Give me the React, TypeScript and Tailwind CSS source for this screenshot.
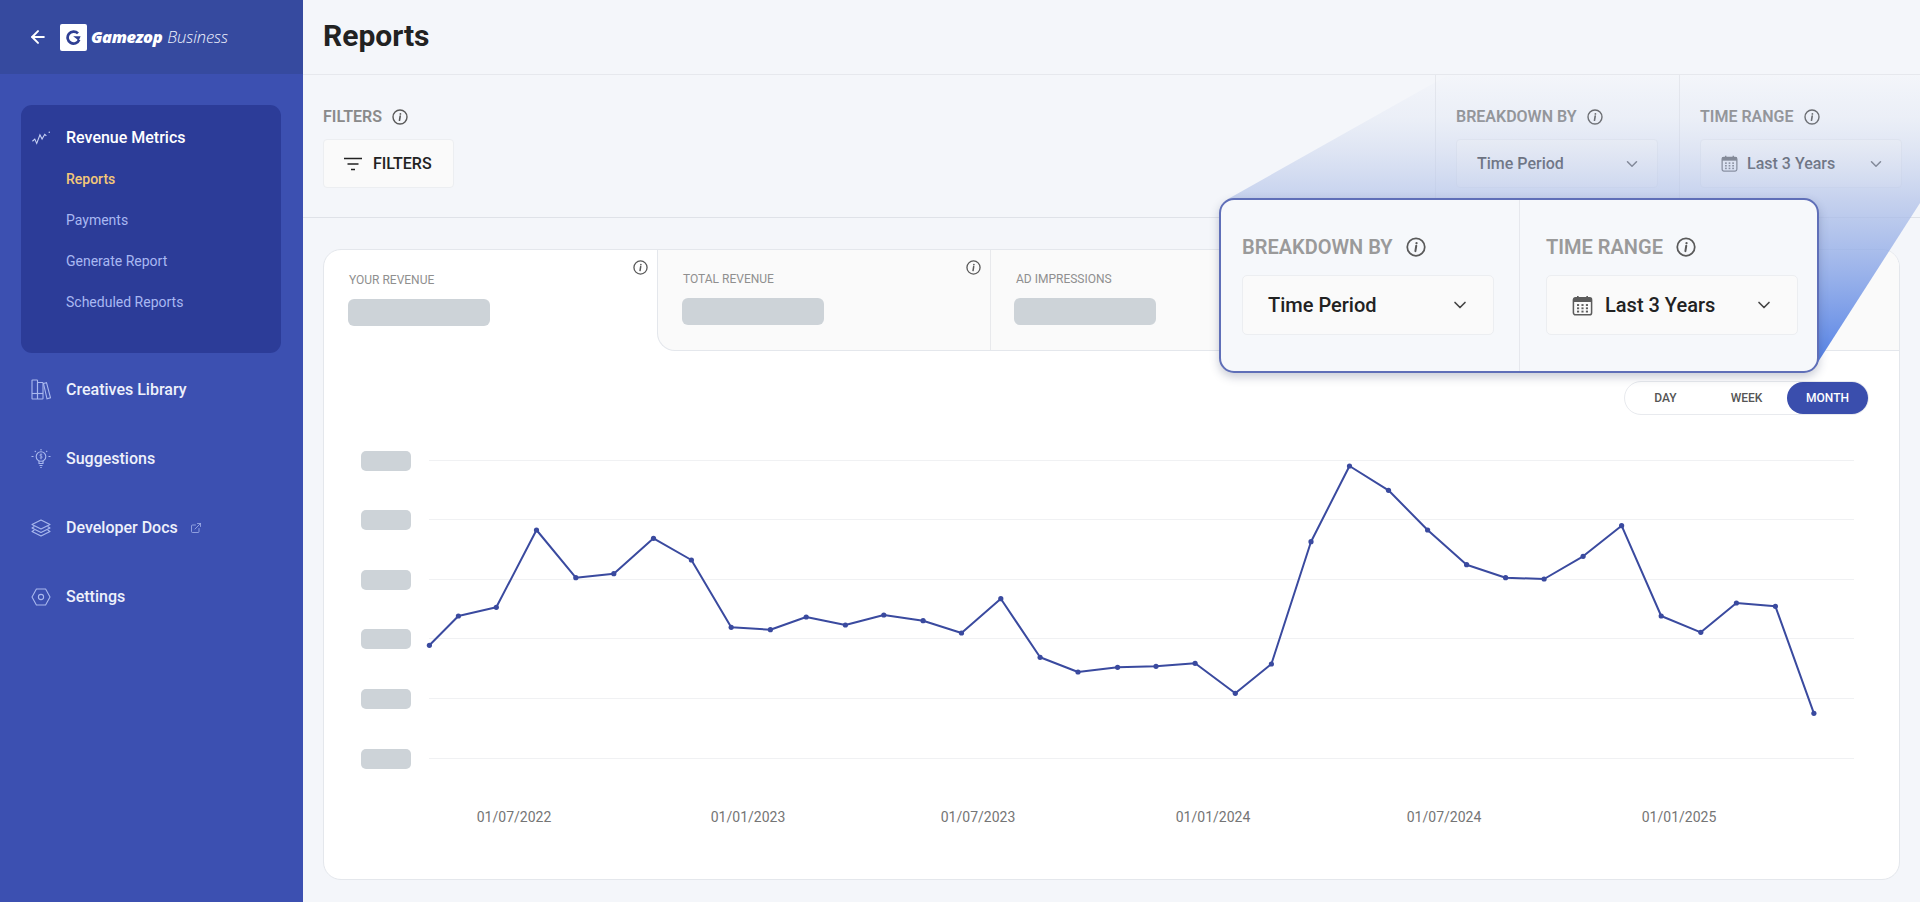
import { ArrowLeft, ChevronDown, ExternalLink } from "lucide-react";

const pts: [number, number][] = [
  [429.4,645.3],[458.4,616],[496.3,607.3],[536.5,530],[575.8,577.7],[613.8,573.7],[653.5,538.3],[691.4,560],
  [731.2,627.3],[770.4,629.7],[806.2,617],[845.4,625],[883.8,615],[923.1,620.7],[961.5,633],[1000.8,598.7],
  [1040.1,657.3],[1078,672],[1117.6,667.3],[1156,666.3],[1195.1,663.3],[1235.3,693.3],[1271.4,664],[1311,541.7],
  [1349.5,466],[1388.5,490.3],[1427.6,530],[1466.6,564.7],[1505.6,577.7],[1544.1,579],[1583.1,556.3],[1621.6,525.7],
  [1661.2,616],[1700.8,632.3],[1736.4,603],[1775.4,606.3],[1813.9,713.3],
];
const gridYs = [460, 519, 579, 638, 698, 758];
const xLabels: [string, number][] = [
  ["01/07/2022", 514],["01/01/2023", 748],["01/07/2023", 978],["01/01/2024", 1213],["01/07/2024", 1444],["01/01/2025", 1679],
];

function Info({ size = 16 }: { size?: number }) {
  return (
    <svg width={size} height={size} viewBox="0 0 16 16" fill="none" className="shrink-0">
      <circle cx="8" cy="8" r="7" stroke="#5a5a5a" strokeWidth="1.4" />
      <circle cx="8.4" cy="4.9" r="0.9" fill="#5a5a5a" />
      <path d="M8.2 7 L7.5 11.3" stroke="#5a5a5a" strokeWidth="1.6" strokeLinecap="round" />
    </svg>
  );
}

function Calendar({ size = 18 }: { size?: number }) {
  return (
    <svg width={size} height={size} viewBox="0 0 18 18" fill="none" className="shrink-0">
      <rect x="1.2" y="2.4" width="15.6" height="14.6" rx="1.8" stroke="#5c5c5c" strokeWidth="1.3" />
      <rect x="1.2" y="2.4" width="15.6" height="3.6" fill="#5c5c5c" />
      <path d="M5 0.8V3M13 0.8V3" stroke="#5c5c5c" strokeWidth="1.4" />
      {[5.2, 9, 12.8].map((x) =>
        [8.6, 11.4, 14.2].map((y) => <rect key={`${x}-${y}`} x={x - 0.9} y={y - 0.8} width="1.8" height="1.6" fill="#5c5c5c" />)
      )}
    </svg>
  );
}

function Select({ label, big, cal, w }: { label: string; big?: boolean; cal?: boolean; w: string }) {
  return (
    <div
      className={
        big
          ? `flex h-[60px] ${w} items-center rounded-[5px] border border-[#eceef1] bg-[#fafafa] pl-[25px] pr-[23px] text-[20px] font-medium text-[#222]`
          : `flex h-[49px] ${w} items-center rounded-[4px] border border-[#eceef1] bg-[#fafafa] pl-[20px] pr-[16px] text-[16px] font-medium text-[#333]`
      }
    >
      {cal && (
        <span className={big ? "mr-[12px]" : "mr-[9px]"}>
          <Calendar size={big ? 21 : 17} />
        </span>
      )}
      <span className="flex-1 whitespace-nowrap">{label}</span>
      <ChevronDown size={big ? 20 : 18} strokeWidth={2} color={big ? "#444" : "#555"} />
    </div>
  );
}

function FieldLabel({ label, big }: { label: string; big?: boolean }) {
  return (
    <div
      className={
        big
          ? "flex items-center gap-[13px] text-[20px] font-semibold leading-[24px] text-[#9a9a9a]"
          : "flex items-center gap-[10px] text-[16px] font-semibold leading-[20px] text-[#8a8a8a]"
      }
    >
      <span className="whitespace-nowrap">{label}</span>
      <Info size={big ? 20 : 16} />
    </div>
  );
}

function Tab({ label, className, textPad, info = true }: { label: string; className: string; textPad: string; info?: boolean }) {
  return (
    <div className={`relative h-[101px] shrink-0 ${className}`}>
      <div className={`text-[12px] leading-[14px] text-[#8f8f8f] ${textPad}`}>{label}</div>
      <div className="mt-[12px] h-[27px] w-[142px] rounded-[6px] bg-[#cdd3d8]" />
      {info && (
        <span className="absolute right-[9px] top-[10px]">
          <Info size={15} />
        </span>
      )}
    </div>
  );
}

function NavItem({ icon, label, extra }: { icon: React.ReactNode; label: string; extra?: React.ReactNode }) {
  return (
    <div className="flex h-[69px] items-center pl-[31px] text-[16px] font-medium text-[#eef1fb]">
      <span className="flex w-[35px] shrink-0 items-center">{icon}</span>
      <span className="whitespace-nowrap">{label}</span>
      {extra}
    </div>
  );
}

const stroke = "#a9b8ee";

export default function App() {
  return (
    <div className="relative flex h-screen w-full overflow-hidden bg-[#f4f6fa] font-['Roboto',sans-serif]">
      <aside className="flex w-[303px] shrink-0 flex-col bg-[#3c50b1]">
        <div className="flex h-[74px] shrink-0 items-center bg-[#364a9f] pl-[28px]">
          <ArrowLeft size={20} strokeWidth={2.4} color="#ffffff" />
          <div className="ml-[12px] flex h-[27px] w-[27px] items-center justify-center rounded-[2px] bg-white">
            <svg width="15" height="15" viewBox="0 0 20 20" fill="none">
              <path d="M16 4.6A8 8 0 1 0 17.6 13" stroke="#2f3f93" strokeWidth="3.6" />
              <path d="M9.5 8.4h10l-2.6 6-3.4-3.2z" fill="#2f3f93" />
            </svg>
          </div>
          <span className="ml-[4px] whitespace-nowrap font-['Open_Sans',sans-serif] text-[16.5px] font-extrabold italic leading-none tracking-[-0.45px] text-white">
            Gamezop
          </span>
          <span className="ml-[5px] whitespace-nowrap font-['Open_Sans',sans-serif] text-[16.5px] font-light italic leading-none tracking-[-0.1px] text-[#eef1fd]">
            Business
          </span>
        </div>

        <div className="ml-[21px] mr-[22px] mt-[31px] h-[248px] shrink-0 rounded-[11px] bg-[#2c3c98] pt-[11px]">
          <div className="flex h-[43px] items-center pl-[10px] text-[16px] font-medium text-white">
            <svg width="20" height="15" viewBox="0 0 18 14" fill="none" className="mr-[15px] shrink-0">
              <path d="M1 10.5 3.2 8.5 5 12.5 8 4.5 10 8.5 12.5 4 14 5.5" stroke="#c9d3f5" strokeWidth="1" />
              <circle cx="16.7" cy="2" r="0.7" fill="#c9d3f5" />
            </svg>
            Revenue Metrics
          </div>
          {["Reports", "Payments", "Generate Report", "Scheduled Reports"].map((t, i) => (
            <div
              key={t}
              className={`flex h-[41px] items-center pl-[45px] text-[14px] ${
                i === 0 ? "font-medium text-[#f4c878]" : "text-[#a9b8f2]"
              }`}
            >
              {t}
            </div>
          ))}
        </div>

        <div className="mt-[2px]">
          <NavItem
            label="Creatives Library"
            icon={
              <svg width="20" height="21" viewBox="0 0 20 21" fill="none" stroke={stroke} strokeWidth="1.1">
                <rect x="1" y="1" width="5.5" height="19" rx="0.6" />
                <path d="M1 14.5h5.5" />
                <rect x="6.5" y="3.5" width="5.5" height="16.5" rx="0.6" />
                <path d="M6.5 14.5H12" />
                <path d="M12.5 4.5 15.5 3.7 19.5 18.8 16 19.8Z" />
              </svg>
            }
          />
          <NavItem
            label="Suggestions"
            icon={
              <svg width="20" height="21" viewBox="0 0 20 21" fill="none" stroke={stroke} strokeWidth="1.1">
                <circle cx="10" cy="8.5" r="4.8" />
                <path d="M8 13v2.5h4V13M8.5 17.5h3M9.3 19.5h1.4" />
                <path d="M10 1v1.6M3.8 2.8l1 1.2M16.2 2.8l-1 1.2M0.5 8.5h2M17.5 8.5h2" />
                <path d="M11.2 6.6c-.8-.7-2.4-.4-2.3.6.1 1.2 2.3.6 2.3 1.9 0 1-1.6 1.2-2.4.5M10 5.6v5.8" strokeWidth="0.8" />
              </svg>
            }
          />
          <NavItem
            label="Developer Docs"
            extra={<ExternalLink size={12} strokeWidth={1.5} color={stroke} className="ml-[12px]" />}
            icon={
              <svg width="20" height="18" viewBox="0 0 20 18" fill="none" stroke={stroke} strokeWidth="1.1" strokeLinejoin="round">
                <path d="M10 1 19 5.6 10 10 1 5.6Z" />
                <path d="M3.4 7.6 1 9 10 13.4 19 9 16.6 7.6" />
                <path d="M3.4 11 1 12.4 10 17 19 12.4 16.6 11" />
              </svg>
            }
          />
          <NavItem
            label="Settings"
            icon={
              <svg width="20" height="18" viewBox="0 0 20 18" fill="none" stroke={stroke} strokeWidth="1.1" strokeLinejoin="round">
                <path d="M5.4 1h9.2L19 9l-4.4 8H5.4L1 9Z" />
                <circle cx="10" cy="9" r="2.6" />
              </svg>
            }
          />
        </div>
      </aside>

      <main className="flex min-w-0 flex-1 flex-col">
        <header className="flex h-[75px] shrink-0 items-center border-b border-[#e6e8ed] pl-[20px] pb-[2px]">
          <h1 className="text-[30px] font-bold leading-none text-[#222]">Reports</h1>
        </header>

        <section className="flex h-[143px] shrink-0 border-b border-[#dfe2e8]">
          <div className="flex-1 pl-[20px] pt-[32px]">
            <FieldLabel label="FILTERS" />
            <button className="mt-[12px] flex h-[49px] w-[131px] items-center rounded-[4px] border border-[#eceef1] bg-[#fafafa] pl-[20px] text-[16px] font-medium text-[#222]">
              <svg width="18" height="14" viewBox="0 0 18 14" fill="none" className="mr-[11px]">
                <path d="M0 1.5h18M3.5 7h11M7 12.5h4" stroke="#222" strokeWidth="1.6" />
              </svg>
              FILTERS
            </button>
          </div>
          <div className="w-[244px] shrink-0 border-l border-[#e6e8ed] pl-[20px] pt-[32px]">
            <FieldLabel label="BREAKDOWN BY" />
            <div className="mt-[12px]">
              <Select label="Time Period" w="w-[202px]" />
            </div>
          </div>
          <div className="w-[241px] shrink-0 border-l border-[#e6e8ed] pl-[20px] pt-[32px]">
            <FieldLabel label="TIME RANGE" />
            <div className="mt-[12px]">
              <Select label="Last 3 Years" cal w="w-[202px]" />
            </div>
          </div>
        </section>

        <div className="px-[20px] pt-[31px]">
          <div className="h-[631px] overflow-hidden rounded-[18px] border border-[#e4e7ec] bg-white">
            <div className="flex h-[101px]">
              <Tab label="YOUR REVENUE" textPad="pl-[1px]" className="w-[333px] pl-[24px] pt-[23px]" />
              <div className="flex h-[101px] flex-1 overflow-hidden rounded-bl-[18px] border-b border-l border-[#e4e7ec] bg-[#fafafa]">
                <Tab label="TOTAL REVENUE" textPad="pl-[1px]" className="w-[333px] border-r border-[#e8e9ec] pl-[24px] pt-[22px]" />
                <Tab label="AD IMPRESSIONS" textPad="pl-[2px]" className="w-[240px] pl-[23px] pt-[22px]" info={false} />
              </div>
            </div>

            <div className="flex justify-end pr-[30px] pt-[30px]">
              <div className="flex h-[34px] w-[245px] items-center rounded-full border border-[#e8eaee] bg-white text-[12px] font-medium text-[#555]">
                <span className="w-[81px] text-center">DAY</span>
                <span className="w-[81px] text-center">WEEK</span>
                <span className="flex h-[32px] w-[81px] items-center justify-center rounded-full bg-[#3a4ead] text-white">MONTH</span>
              </div>
            </div>

            <div className="relative h-[464px]">
              {/* chart canvas: page coordinates shifted by the card's offset */}
              <svg width="1576" height="464" viewBox="324 415 1576 464" className="absolute left-0 top-0" fill="none">
                {gridYs.map((y) => (
                  <line key={y} x1="429" x2="1854" y1={y + 0.5} y2={y + 0.5} stroke="#f0f1f3" strokeWidth="1" />
                ))}
                <polyline points={pts.map((p) => p.join(",")).join(" ")} stroke="#3a4a9f" strokeWidth="2" strokeLinejoin="round" />
                {pts.map((p, i) => (
                  <circle key={i} cx={p[0]} cy={p[1]} r="2.6" fill="#3a4a9f" />
                ))}
              </svg>
              {gridYs.map((y) => (
                <div key={y} className="absolute left-[37px] h-[20px] w-[50px] rounded-[5px] bg-[#cdd3d8]" style={{ top: y - 9 - 415 }} />
              ))}
              {xLabels.map(([t, x]) => (
                <span key={t} className="absolute top-[393px] -translate-x-1/2 text-[14px] leading-[18px] text-[#757575]" style={{ left: x - 324 }}>
                  {t}
                </span>
              ))}
            </div>
          </div>
        </div>
      </main>

      {/* zoom callout wedge */}
      <svg width="1920" height="902" viewBox="0 0 1920 902" className="pointer-events-none absolute left-0 top-0" fill="none">
        <defs>
          <linearGradient id="wedge" x1="0" y1="74" x2="0" y2="362" gradientUnits="userSpaceOnUse">
            <stop offset="0" stopColor="#b7c5e8" stopOpacity="0" />
            <stop offset="0.15" stopColor="#c3cfea" stopOpacity="0.18" />
            <stop offset="0.45" stopColor="#aebfe8" stopOpacity="0.7" />
            <stop offset="1" stopColor="#5582e6" stopOpacity="1" />
          </linearGradient>
        </defs>
        <polygon points="1228,199 1450,74 1920,74 1920,203 1818,362" fill="url(#wedge)" />
      </svg>

      {/* zoom callout */}
      <div className="absolute left-[1219px] top-[198px] flex h-[175px] w-[600px] rounded-[15px] border-2 border-[#5f6fb8] bg-[#f6f8fb] shadow-[0_4px_10px_rgba(40,50,90,0.25)]">
        <div className="w-[299px] shrink-0 border-r border-[#e6e8ed] pl-[21px] pt-[35px]">
          <FieldLabel label="BREAKDOWN BY" big />
          <div className="mt-[16px]">
            <Select label="Time Period" big w="w-[252px]" />
          </div>
        </div>
        <div className="flex-1 pl-[26px] pt-[35px]">
          <FieldLabel label="TIME RANGE" big />
          <div className="mt-[16px]">
            <Select label="Last 3 Years" big cal w="w-[252px]" />
          </div>
        </div>
      </div>
    </div>
  );
}
